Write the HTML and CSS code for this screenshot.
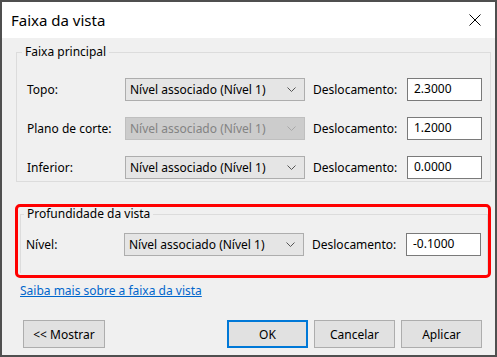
FILE: index.html
```html
<!DOCTYPE html>
<html lang="pt">
<head>
  <meta charset="UTF-8">
  <title>Faixa da vista</title>
  <link rel="stylesheet" href="styles.css">
</head>
<body>
  <div class="dialog">
    <div class="titlebar">
      <span class="title">Faixa da vista</span>
      <svg class="close" width="12" height="12" viewBox="0 0 12 12">
        <path d="M0.5 0.5 L11.5 11.5 M11.5 0.5 L0.5 11.5" stroke="#000" stroke-width="1"/>
      </svg>
    </div>

    <div class="content">
      <fieldset class="group main-group">
        <legend>Faixa principal</legend>
        <div class="rows">
          <label>Topo:</label>
          <div class="combo"><span>Nível associado (Nível 1)</span><svg width="9" height="5" viewBox="0 0 9 5"><path d="M0.5 0.5 L4.5 4.5 L8.5 0.5" fill="none" stroke="#555"/></svg></div>
          <label class="offset">Deslocamento:</label>
          <div class="textbox">2.3000</div>

          <label>Plano de corte:</label>
          <div class="combo disabled"><span>Nível associado (Nível 1)</span><svg width="9" height="5" viewBox="0 0 9 5"><path d="M0.5 0.5 L4.5 4.5 L8.5 0.5" fill="none" stroke="#a8a8a8"/></svg></div>
          <label class="offset">Deslocamento:</label>
          <div class="textbox">1.2000</div>

          <label>Inferior:</label>
          <div class="combo"><span>Nível associado (Nível 1)</span><svg width="9" height="5" viewBox="0 0 9 5"><path d="M0.5 0.5 L4.5 4.5 L8.5 0.5" fill="none" stroke="#555"/></svg></div>
          <label class="offset">Deslocamento:</label>
          <div class="textbox">0.0000</div>
        </div>
      </fieldset>

      <div class="highlight">
        <fieldset class="group depth-group">
          <legend>Profundidade da vista</legend>
          <div class="rows">
            <label>Nível:</label>
            <div class="combo"><span>Nível associado (Nível 1)</span><svg width="9" height="5" viewBox="0 0 9 5"><path d="M0.5 0.5 L4.5 4.5 L8.5 0.5" fill="none" stroke="#555"/></svg></div>
            <label class="offset">Deslocamento:</label>
            <div class="textbox">-0.1000</div>
          </div>
        </fieldset>
      </div>

      <a class="help-link" href="#">Saiba mais sobre a faixa da vista</a>

      <div class="footer">
        <button class="btn">&lt;&lt; Mostrar</button>
        <div class="footer-right">
          <button class="btn default">OK</button>
          <button class="btn">Cancelar</button>
          <button class="btn">Aplicar</button>
        </div>
      </div>
    </div>
  </div>
</body>
</html>
```

FILE: styles.css
```css
body {
  margin: 0;
  font-family: "Noto Sans", "Open Sans", sans-serif;
  font-size: 12px;
  color: #000;
}

.dialog {
  width: 497px;
  height: 357px;
  box-sizing: border-box;
  border: 2px solid #4f4f4f;
  background-color: #f0f0f0;
  display: flex;
  flex-direction: column;
}

.titlebar {
  height: 36px;
  background-color: #fff;
  display: flex;
  align-items: center;
  justify-content: space-between;
  padding: 0 14px 0 9px;
}

.title {
  font-size: 15px;
}

.content {
  flex: 1;
  display: flex;
  flex-direction: column;
  padding: 7px 4px 0 14px;
}

.group {
  margin: 0;
  border: 1px solid #dcdcdc;
  padding: 0 0 2px 10px;
  min-width: 0;
}

.group legend {
  padding: 0 3px;
  margin-left: -5px;
  line-height: 14px;
}

.main-group {
  padding-top: 19px;
}

.rows {
  display: grid;
  grid-template-columns: 98px 180px 102px 75px;
  grid-auto-rows: 23px;
  row-gap: 16px;
  align-items: center;
}

.offset {
  padding-left: 8px;
}

.combo {
  height: 23px;
  box-sizing: border-box;
  border: 1px solid #adadad;
  background-color: #e5e5e5;
  display: flex;
  align-items: center;
  justify-content: space-between;
  padding: 0 8px 0 4px;
}

.combo.disabled {
  background-color: #cccccc;
  border-color: #bfbfbf;
  color: #838383;
}

.textbox {
  height: 23px;
  box-sizing: border-box;
  border: 1px solid #7a7a7a;
  background-color: #fff;
  padding: 0 6px;
  line-height: 20px;
}

.highlight {
  margin: 22px 0 0 -1px;
  border: 3px solid #ff0000;
  border-radius: 5px;
  padding: 0 0 2px 2px;
}

.depth-group {
  border-bottom: none;
  padding-top: 12px;
  padding-bottom: 17px;
  padding-left: 5px;
}

.depth-group legend {
  margin-left: -2px;
}

.help-link {
  margin: 4px 0 0 4px;
  color: #0066cc;
  align-self: flex-start;
}

.footer {
  display: flex;
  justify-content: space-between;
  margin: 21px 9px 0 7px;
}

.footer-right {
  display: flex;
  gap: 6px;
}

.btn {
  width: 82px;
  height: 28px;
  box-sizing: border-box;
  border: 1px solid #adadad;
  background-color: #e1e1e1;
  font-family: inherit;
  font-size: 12px;
  color: #000;
  padding: 0;
}

.footer-right .btn {
  width: 81px;
}

.btn.default {
  border: 2px solid #0078d7;
}
```
